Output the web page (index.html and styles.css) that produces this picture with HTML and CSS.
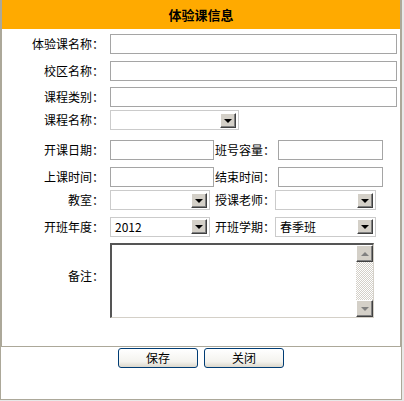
FILE: index.html
```html
<!DOCTYPE html>
<html lang="zh-CN">
<head>
  <meta charset="UTF-8">
  <title>体验课信息</title>
  <link rel="stylesheet" href="styles.css">
</head>
<body>
  <div class="frame">
    <div class="panel">
      <div class="panel-header">体验课信息</div>

      <div class="form">
        <div class="row input-row">
          <label class="label">体验课名称：</label>
          <input type="text" class="text w-full">
        </div>
        <div class="row input-row">
          <label class="label">校区名称：</label>
          <input type="text" class="text w-full">
        </div>
        <div class="row input-row">
          <label class="label">课程类别：</label>
          <input type="text" class="text w-full">
        </div>
        <div class="row">
          <label class="label">课程名称：</label>
          <div class="select w-course"><span class="value"></span><span class="drop"></span></div>
        </div>
        <div class="row input-row">
          <label class="label">开课日期：</label>
          <input type="text" class="text w-half">
          <label class="label-2 after-input">班号容量：</label>
          <input type="text" class="text w-half2">
        </div>
        <div class="row input-row">
          <label class="label">上课时间：</label>
          <input type="text" class="text w-half">
          <label class="label-2 after-input">结束时间：</label>
          <input type="text" class="text w-half2">
        </div>
        <div class="row">
          <label class="label">教室：</label>
          <div class="select w-sel"><span class="value"></span><span class="drop"></span></div>
          <label class="label-2 after-select">授课老师：</label>
          <div class="select w-sel2"><span class="value"></span><span class="drop"></span></div>
        </div>
        <div class="row">
          <label class="label">开班年度：</label>
          <div class="select w-sel"><span class="value">2012</span><span class="drop"></span></div>
          <label class="label-2 after-select">开班学期：</label>
          <div class="select w-sel2"><span class="value">春季班</span><span class="drop"></span></div>
        </div>
        <div class="row memo-row">
          <label class="label memo-label">备注：</label>
          <div class="memo">
            <div class="memo-text"></div>
            <div class="scrollbar">
              <span class="sb-btn"><span class="tri-up"></span></span>
              <span class="sb-track"></span>
              <span class="sb-btn"><span class="tri-down"></span></span>
            </div>
          </div>
        </div>
      </div>
    </div>

    <div class="actions">
      <button type="button" class="btn">保存</button>
      <button type="button" class="btn">关闭</button>
    </div>
  </div>
</body>
</html>
```

FILE: styles.css
```css
body {
  margin: 0;
  background-color: #e8e8e8;
  font-family: "Noto Sans CJK SC", sans-serif;
  font-size: 12px;
  color: #000;
}

.frame {
  width: 400px;
  height: 399px;
  background-color: #fff;
  border: 1px solid #aca899;
  border-top: none;
}

.panel {
  height: 346px;
  border: 1px solid #aca899;
  border-top: none;
}

.panel-header {
  height: 29px;
  line-height: 29px;
  background-color: #ffaa00;
  text-align: center;
  font-size: 13px;
  font-weight: bold;
}

.form {
  padding-top: 1.7px;
}

.row {
  display: flex;
  align-items: flex-start;
  height: 26.6px;
}

.input-row {
  padding-top: 3.3px;
  box-sizing: border-box;
}

.label {
  width: 102px;
  margin-right: 6px;
  text-align: right;
  line-height: 20px;
  white-space: nowrap;
}

.label-2 {
  width: 60px;
  line-height: 20px;
  white-space: nowrap;
}

.after-input {
  margin-left: 1px;
  margin-right: 3px;
}

.after-select {
  margin-left: 5px;
}

.text {
  height: 20px;
  margin: 0;
  padding: 0 3px;
  border: 1px solid #a5a5a5;
  box-sizing: border-box;
  font-size: 12px;
}

.w-full { width: 287px; }
.w-half { width: 104px; }
.w-half2 { width: 105px; }

.select {
  display: flex;
  align-items: center;
  height: 20px;
  padding: 0 2px 0 4px;
  border: 1px solid #cbcbcb;
  box-sizing: border-box;
  background-color: #fff;
}

.w-course { width: 129px; }
.w-sel { width: 100px; }
.w-sel2 { width: 101px; }

.select .value {
  flex: 1;
  line-height: 18px;
}

.drop {
  display: flex;
  align-items: center;
  justify-content: center;
  width: 16px;
  height: 15px;
  box-sizing: border-box;
  background-color: #d4d0c8;
  border-top: 1px solid #fff;
  border-left: 1px solid #fff;
  border-right: 1px solid #404040;
  border-bottom: 1px solid #404040;
  box-shadow: inset -1px -1px 0 #808080;
}

.drop::after {
  content: "";
  border-left: 4px solid transparent;
  border-right: 4px solid transparent;
  border-top: 4px solid #000;
  margin-top: 1px;
}

.memo-row {
  align-items: center;
  height: 75px;
}

.memo-label {
  margin-bottom: 9px;
}

.memo {
  display: flex;
  width: 264px;
  height: 75px;
  box-sizing: border-box;
  border-top: 2px solid #555;
  border-left: 2px solid #555;
  border-right: 1px solid #d4d0c8;
  border-bottom: 1px solid #d4d0c8;
  background-color: #fff;
}

.memo-text {
  flex: 1;
}

.scrollbar {
  display: flex;
  flex-direction: column;
  width: 17px;
}

.sb-btn {
  display: flex;
  align-items: center;
  justify-content: center;
  height: 17px;
  box-sizing: border-box;
  background-color: #d4d0c8;
  border-top: 1px solid #fff;
  border-left: 1px solid #fff;
  border-right: 1px solid #404040;
  border-bottom: 1px solid #404040;
  box-shadow: inset -1px -1px 0 #808080;
}

.sb-track {
  flex: 1;
  background-color: #fff;
  background-image: repeating-conic-gradient(#d4d0c8 0 25%, #fff 0 50%);
  background-size: 2px 2px;
}

.tri-up {
  border-left: 4px solid transparent;
  border-right: 4px solid transparent;
  border-bottom: 4px solid #808080;
}

.tri-down {
  border-left: 4px solid transparent;
  border-right: 4px solid transparent;
  border-top: 4px solid #808080;
}

.actions {
  display: flex;
  justify-content: center;
  gap: 6px;
  padding-top: 1px;
}

.btn {
  width: 80px;
  height: 20px;
  padding: 0;
  border: 1px solid #003c74;
  border-radius: 3px;
  background: linear-gradient(#ffffff, #f4f3ee 70%, #dcd8cc);
  font-family: "Noto Sans CJK SC", sans-serif;
  font-size: 12px;
  line-height: 18px;
  color: #000;
}
```
